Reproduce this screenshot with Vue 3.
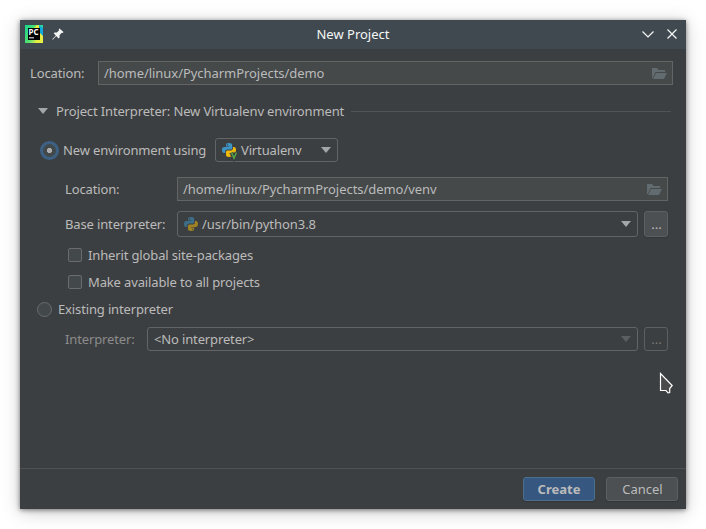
<script setup>
import { ref } from 'vue'

const title = ref('New Project')
const location = ref('/home/linux/PycharmProjects/demo')
const envLocation = ref('/home/linux/PycharmProjects/demo/venv')
const options = ['Inherit global site-packages', 'Make available to all projects']
</script>

<template>
  <svg class="defs" width="0" height="0" aria-hidden="true">
    <symbol id="python" viewBox="0 0 14 14">
      <path fill="#3d94c4" d="M7 0C4.500 0 4 .8 4 2v1.500h3.300V4H2.200C.8 4 0 5.200 0 7c0 1.900.8 3 2 3h1.200V8.400c0-1 .9-1.800 1.900-1.800h3.400c.9 0 1.700-.7 1.700-1.600V2C10.200.7 9.100 0 7 0z" />
      <path fill="#f0b90b" d="M7 14c2.500 0 3.200-.8 3.200-2v-1.500H6.900V10h4.900C13.200 10 14 8.800 14 7c0-1.900-.8-3-2-3h-1v1.600c0 1-.9 1.800-1.900 1.800H5.700C4.700 7.400 4 8 4 9v3c0 1.300 1 2 3 2z" />
      <circle cx="5.500" cy="1.900" r=".6" fill="#3c3f41" />
      <circle cx="8.700" cy="12.100" r=".6" fill="#3c3f41" />
    </symbol>
    <symbol id="folder" viewBox="0 0 15 11">
      <path d="M0 10V0h5l1.500 2H13v2H3.500L.8 10z" />
      <path d="M4 5h11l-3 6H1z" />
    </symbol>
  </svg>

  <main class="desktop">
    <section class="window">
      <header class="titlebar">
        <svg class="logo" viewBox="0 0 18 18">
          <defs>
            <linearGradient id="lg" x1="0" y1=".3" x2="1" y2=".8">
              <stop offset="0" stop-color="#21d789" />
              <stop offset=".45" stop-color="#5be36a" />
              <stop offset=".8" stop-color="#f2ee4a" />
            </linearGradient>
          </defs>
          <path fill="url(#lg)" d="M0 0h18v18H0z" />
          <path fill="#e6ee3f" d="M9 3l3-3h2v4zM14 9l4 3v6h-8z" />
          <path fill="#0fa7dc" d="M14 0h4v11l-4-4z" />
          <path fill="#25d9a0" d="M13 0h5v3z" />
          <path fill="#000" d="M3 3h12v12H3z" />
          <path fill="#aaa" d="M4 12h5v1.500H4z" />
          <text x="3.500" y="9.700" textLength="10" lengthAdjust="spacingAndGlyphs" class="logo-text">PC</text>
        </svg>
        <svg class="pin" viewBox="0 0 12 12">
          <path fill="#f4f5f5" d="M7.500.5L11.500 4l-.8.900-1-.2-2.200 2.600.1 2.200-1 .9-2.400-2.300L1 11.500l-.7.200.2-.8L3.800 7.500 1.700 5.300l.9-.9 2.200.1L7.200 2.200 6.700 1.300z" />
        </svg>
        <h1>{{ title }}</h1>
        <svg class="controls" viewBox="0 0 35 10">
          <path d="M.5 2.500L6 8l5.500-5.500M25.500.5l9 9M34.500.5l-9 9" />
        </svg>
      </header>

      <div class="content">
        <div class="row project">
          <label>Location:</label>
          <div class="field">
            <span class="path-long">{{ location }}</span>
            <svg class="folder"><use href="#folder" /></svg>
          </div>
        </div>

        <div class="row group">
          <i class="arrow"></i>
          <span class="group-title">Project Interpreter: New Virtualenv environment</span>
          <i class="rule"></i>
        </div>

        <div class="row new-env">
          <i class="radio selected"></i>
          <span class="new-label">New environment using</span>
          <div class="field combo tool">
            <span class="tool-icon">
              <svg class="python"><use href="#python" /></svg>
              <svg class="vmark" viewBox="0 0 6 7">
                <path class="halo" d="M.6.5L3 6.200 5.400.5" />
                <path d="M.6.5L3 6.200 5.400.5" />
              </svg>
            </span>
            <span>Virtualenv</span>
            <i class="arrow"></i>
          </div>
        </div>

        <div class="row env-location">
          <label>Location:</label>
          <div class="field">
            <span class="path-long">{{ envLocation }}</span>
            <svg class="folder"><use href="#folder" /></svg>
          </div>
        </div>

        <div class="row base">
          <label>Base interpreter:</label>
          <div class="field combo">
            <svg class="python dim"><use href="#python" /></svg>
            <span class="path-long">/usr/bin/python3.8</span>
            <i class="arrow"></i>
          </div>
          <button class="more">...</button>
        </div>

        <div v-for="option in options" :key="option" class="row check">
          <i class="box"></i>
          <span>{{ option }}</span>
        </div>

        <div class="row existing">
          <i class="radio"></i>
          <span>Existing interpreter</span>
        </div>

        <div class="row interpreter">
          <label>Interpreter:</label>
          <div class="field combo">
            <span>&lt;No interpreter&gt;</span>
            <i class="arrow"></i>
          </div>
          <button class="more off">...</button>
        </div>
      </div>

      <footer class="footer">
        <button class="primary">Create</button>
        <button class="cancel">Cancel</button>
      </footer>
    </section>

    <svg class="cursor" viewBox="0 0 14 22">
      <path d="M1.500 1.500v17h5.500l2 2.300 1.700-.3v-4l2.500-3z" />
    </svg>
  </main>
</template>

<style>
body {
  background: #fff;
}
</style>

<style scoped>
* {
  box-sizing: border-box;
}
.defs {
  position: absolute;
}
.desktop {
  width: 706px;
  height: 529px;
  padding: 20px;
  overflow: hidden;
  position: relative;
  font: 13px/18px "Noto Sans", sans-serif;
  letter-spacing: -0.14px;
  color: #bbb;
  white-space: nowrap;
}
.window {
  width: 666px;
  height: 489px;
  display: flex;
  flex-direction: column;
  background: #3c3f41;
  box-shadow: 0 1px 5px rgba(0, 0, 0, 0.5), 0 3px 18px rgba(0, 0, 0, 0.2);
}
.titlebar {
  height: 29px;
  flex: none;
  display: flex;
  align-items: center;
  padding: 0 9px 1px 5px;
  background: #404950;
  color: #f5f6f6;
}
.logo {
  width: 18px;
  height: 18px;
}
.logo-text {
  font: 700 8px "Noto Sans", sans-serif;
  letter-spacing: 0;
  fill: #fff;
}
.pin {
  width: 12px;
  height: 12px;
  margin-left: 9px;
}
h1 {
  flex: 1;
  margin: 0;
  text-align: center;
  font: inherit;
  letter-spacing: 0;
}
.controls {
  width: 35px;
  height: 10px;
  overflow: visible;
  fill: none;
  stroke: #f5f6f6;
  stroke-width: 1.200;
}
.content {
  flex: 1;
}
.row {
  display: flex;
  align-items: center;
  height: 24px;
}
.field {
  flex: 1;
  height: 100%;
  display: flex;
  align-items: center;
  padding: 0 5px;
  border: 1px solid #646464;
  background: #45494a;
}
.path-long {
  letter-spacing: -0.05px;
}
.combo {
  padding: 0 6px;
  background: #3c3f41;
  border-radius: 3px;
}
.folder {
  width: 15px;
  height: 11px;
  margin-left: auto;
  fill: #626b70;
}
.arrow {
  width: 10px;
  height: 6px;
  background: #a4a7a8;
  clip-path: polygon(0 0, 100% 0, 50% 100%);
}
.combo .arrow {
  margin-left: auto;
}
.project {
  margin-top: 12px;
  padding: 0 13px 0 10px;
}
.project label {
  width: 68px;
}
.group {
  margin-top: 14px;
  padding: 0 15px 0 18px;
}
.group-title {
  margin: 0 7px 0 8px;
}
.rule {
  flex: 1;
  height: 1px;
  background: #515456;
}
.radio {
  width: 15px;
  height: 15px;
  flex: none;
  border: 1px solid #6b6b6b;
  border-radius: 50%;
  background: #43494a;
}
.radio.selected {
  width: 19px;
  height: 19px;
  border: 3px solid #3d6185;
  background: radial-gradient(circle, #adadad 0 2.300px, #43494a 2.900px);
}
.new-env {
  margin-top: 15px;
  padding-left: 20px;
}
.new-label {
  width: 152px;
  margin-left: 4px;
}
.tool {
  flex: none;
  width: 123px;
}
.tool-icon {
  position: relative;
  height: 14px;
  margin-right: 5px;
}
.python {
  display: block;
  width: 14px;
  height: 14px;
}
.python.dim {
  margin-right: 4px;
  opacity: 0.55;
}
.vmark {
  position: absolute;
  left: 9px;
  top: 9px;
  width: 6px;
  height: 7px;
  overflow: visible;
  fill: none;
  stroke: #57b044;
  stroke-width: 1.300;
}
.halo {
  stroke: #3c3f41;
  stroke-width: 3.500;
}
.env-location {
  margin-top: 15px;
  padding: 0 18px 0 45px;
}
.env-location label,
.base label {
  width: 112px;
}
.base {
  height: 26px;
  margin-top: 10px;
  padding: 0 18px 0 45px;
}
button {
  width: 72px;
  height: 24px;
  padding: 0;
  font: inherit;
  color: #bbb;
  background: #4c5052;
  border: 1px solid #5e6060;
  border-radius: 3px;
  box-shadow: 0 1px 1px rgba(0, 0, 0, 0.15);
}
.more {
  width: 24px;
  height: 100%;
  margin-left: 6px;
  padding-left: 1px;
}
.more.off {
  color: #777;
  background: none;
  box-shadow: none;
}
.check {
  height: 14px;
  margin-top: 13px;
  padding-left: 48px;
  gap: 6px;
}
.base + .check {
  margin-top: 11px;
}
.box {
  width: 14px;
  height: 14px;
  border: 1px solid #6b6b6b;
  border-radius: 2px;
  background: #43494a;
}
.existing {
  height: 15px;
  margin-top: 13px;
  padding-left: 17px;
  gap: 6px;
}
.existing span {
  padding-bottom: 1px;
}
.interpreter {
  margin-top: 10px;
  padding: 0 18px 0 45px;
}
.interpreter label {
  width: 82px;
  color: #8c8c8c;
}
.interpreter .arrow {
  background: #5c5f61;
}
.footer {
  height: 41px;
  flex: none;
  display: flex;
  gap: 11px;
  justify-content: flex-end;
  padding: 8px 8px 0 0;
  border-top: 1px solid #515151;
}
.primary {
  font-weight: 700;
  letter-spacing: 0;
  background: #365880;
  border-color: #4c708c;
}
.cancel {
  padding-left: 1px;
}
.cursor {
  position: absolute;
  left: 659px;
  top: 372px;
  width: 14px;
  height: 22px;
  fill: #4b4b4b;
  stroke: #fff;
  stroke-width: 1.200;
}
</style>
